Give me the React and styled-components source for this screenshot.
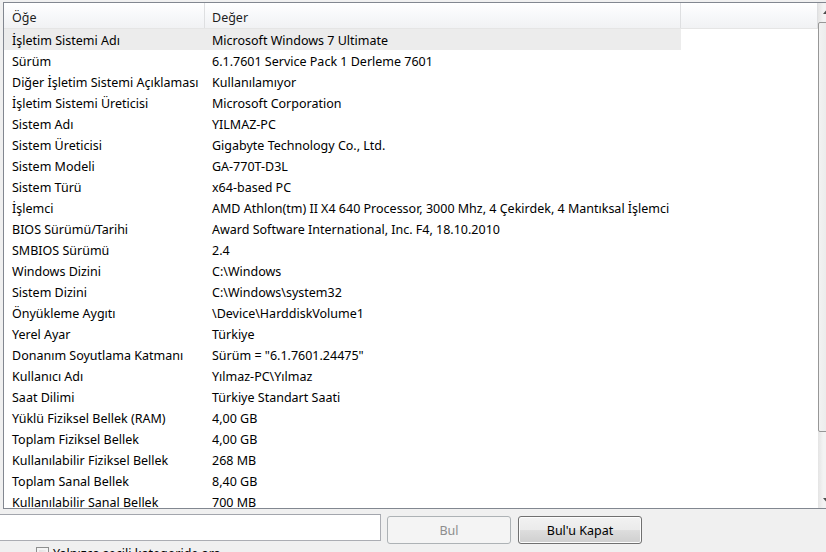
import React from 'react';
import styled, { createGlobalStyle } from 'styled-components';

const GlobalStyle = createGlobalStyle`
  body {
    margin: 0;
    overflow: hidden;
    background: #f0f0f0;
  }
`;

const rows = [
  ['İşletim Sistemi Adı', 'Microsoft Windows 7 Ultimate'],
  ['Sürüm', '6.1.7601 Service Pack 1 Derleme 7601'],
  ['Diğer İşletim Sistemi Açıklaması', 'Kullanılamıyor'],
  ['İşletim Sistemi Üreticisi', 'Microsoft Corporation'],
  ['Sistem Adı', 'YILMAZ-PC'],
  ['Sistem Üreticisi', 'Gigabyte Technology Co., Ltd.'],
  ['Sistem Modeli', 'GA-770T-D3L'],
  ['Sistem Türü', 'x64-based PC'],
  ['İşlemci', 'AMD Athlon(tm) II X4 640 Processor, 3000 Mhz, 4 Çekirdek, 4 Mantıksal İşlemci'],
  ['BIOS Sürümü/Tarihi', 'Award Software International, Inc. F4, 18.10.2010'],
  ['SMBIOS Sürümü', '2.4'],
  ['Windows Dizini', 'C:\\Windows'],
  ['Sistem Dizini', 'C:\\Windows\\system32'],
  ['Önyükleme Aygıtı', '\\Device\\HarddiskVolume1'],
  ['Yerel Ayar', 'Türkiye'],
  ['Donanım Soyutlama Katmanı', 'Sürüm = "6.1.7601.24475"'],
  ['Kullanıcı Adı', 'Yılmaz-PC\\Yılmaz'],
  ['Saat Dilimi', 'Türkiye Standart Saati'],
  ['Yüklü Fiziksel Bellek (RAM)', '4,00 GB'],
  ['Toplam Fiziksel Bellek', '4,00 GB'],
  ['Kullanılabilir Fiziksel Bellek', '268 MB'],
  ['Toplam Sanal Bellek', '8,40 GB'],
  ['Kullanılabilir Sanal Bellek', '700 MB'],
];

const Window = styled.div`
  width: 826px;
  height: 552px;
  overflow: hidden;
  background: #f0f0f0;
  font-family: "Noto Sans", "Liberation Sans", sans-serif;
  font-size: 12.5px;
  color: #000;
  display: flex;
  flex-direction: column;
`;

const ListBox = styled.div`
  margin: 2px 0 0 3px;
  width: 833px;
  height: 507px;
  flex-shrink: 0;
  box-sizing: border-box;
  border: 1px solid #828790;
  background: #fff;
  display: flex;
  overflow: hidden;
`;

const Table = styled.div`
  flex: 1;
  overflow: hidden;
`;

const Header = styled.div`
  display: grid;
  grid-template-columns: 201px 476px 1fr;
  height: 26px;
  box-sizing: border-box;
  border-bottom: 1px solid #e5e5e5;
  background: linear-gradient(#ffffff, #f7f8fa 50%, #f1f2f4);
`;

const HeadCell = styled.div`
  display: flex;
  align-items: center;
  padding: 3px 0 0 ${p => p.$pad || 8}px;
  border-right: 1px solid #dedfe1;
  color: #1e1e1e;
`;

const Row = styled.div`
  display: grid;
  grid-template-columns: 201px 476px 1fr;
  height: 21px;
`;

const Cell = styled.div`
  display: flex;
  align-items: center;
  padding: 2px 0 0 ${p => p.$pad}px;
  white-space: nowrap;
  background: ${p => (p.$selected ? '#ececec' : 'transparent')};
`;

const Scrollbar = styled.div`
  width: 17px;
  display: flex;
  flex-direction: column;
  background: linear-gradient(90deg, #e4e4e4, #f3f3f3 30%, #f3f3f3 70%, #e4e4e4);
`;

const Arrow = styled.div`
  height: 17px;
  display: flex;
  align-items: center;
  justify-content: center;
  svg {
    display: block;
  }
`;

const Thumb = styled.div`
  margin: 2px 0 0;
  height: 410px;
  box-sizing: border-box;
  border: 1px solid #979797;
  border-radius: 2px;
  background: linear-gradient(90deg, #f2f2f2, #e6e6e6);
`;

const Track = styled.div`
  flex: 1;
`;

const Footer = styled.div`
  display: flex;
  align-items: flex-start;
  padding-top: 5px;
  height: 32px;
  flex-shrink: 0;
`;

const SearchInput = styled.div`
  margin-left: -10px;
  width: 391px;
  height: 27px;
  box-sizing: border-box;
  border: 1px solid #abadb3;
  border-top-color: #a3a6ad;
  background: #fff;
`;

const Button = styled.div`
  margin: 2px 0 0 ${p => p.$gap}px;
  width: 124px;
  height: 28px;
  box-sizing: border-box;
  border: 1px solid ${p => (p.$disabled ? '#adb2b5' : '#707070')};
  border-radius: 3px;
  display: flex;
  align-items: center;
  justify-content: center;
  color: ${p => (p.$disabled ? '#8d8d8d' : '#000')};
  background: ${p =>
    p.$disabled
      ? '#f4f4f4'
      : 'linear-gradient(#f2f2f2, #ebebeb 48%, #dddddd 52%, #cfcfcf)'};
  box-shadow: inset 0 0 0 1px ${p => (p.$disabled ? '#f4f4f4' : '#fcfcfc')};
`;

const CheckRow = styled.div`
  display: flex;
  align-items: flex-start;
  padding-left: 36px;
  gap: 4px;
  margin-top: 1px;
  white-space: nowrap;
`;

const Box = styled.div`
  width: 13px;
  height: 13px;
  box-sizing: border-box;
  border: 1px solid #8e8f8f;
  background: linear-gradient(135deg, #dcdcdc, #fbfbfb);
  box-shadow: inset 0 0 0 2px #f4f4f4;
`;

const CheckLabel = styled.span`
  margin-top: -2px;
`;

export default function App() {
  return (
    <Window>
      <GlobalStyle />
      <ListBox>
        <Table>
          <Header>
            <HeadCell $pad={8}>Öğe</HeadCell>
            <HeadCell $pad={7}>Değer</HeadCell>
            <HeadCell />
          </Header>
          {rows.map(([name, value], i) => (
            <Row key={name}>
              <Cell $pad={8} $selected={i === 0}>{name}</Cell>
              <Cell $pad={7} $selected={i === 0}>{value}</Cell>
              <Cell />
            </Row>
          ))}
        </Table>
        <Scrollbar>
          <Arrow>
            <svg width="7" height="4" viewBox="0 0 7 4">
              <path d="M0 4 L3.5 0 L7 4 Z" fill="#4d4d4d" />
            </svg>
          </Arrow>
          <Thumb />
          <Track />
          <Arrow>
            <svg width="7" height="4" viewBox="0 0 7 4">
              <path d="M0 0 L3.5 4 L7 0 Z" fill="#4d4d4d" />
            </svg>
          </Arrow>
        </Scrollbar>
      </ListBox>
      <Footer>
        <SearchInput />
        <Button $disabled $gap={6}>Bul</Button>
        <Button $gap={7}>Bul'u Kapat</Button>
      </Footer>
      <CheckRow>
        <Box />
        <CheckLabel>Yalnızca seçili kategoride ara</CheckLabel>
      </CheckRow>
    </Window>
  );
}
